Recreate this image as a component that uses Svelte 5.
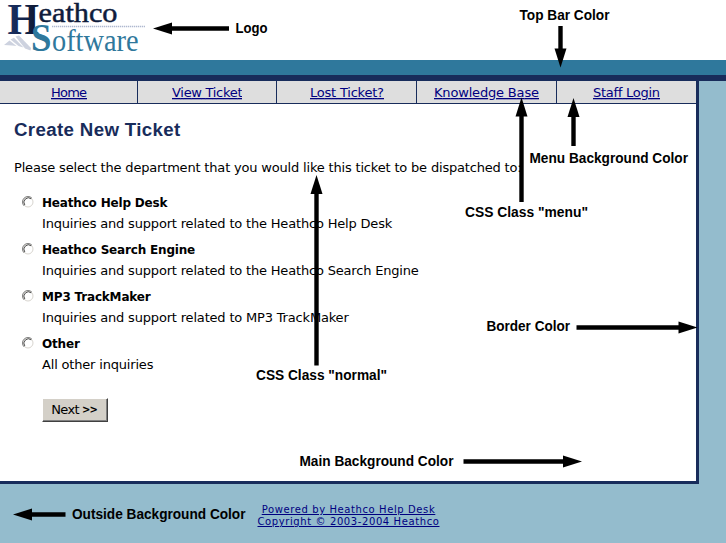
<script>
  const menu = [
    { label: 'Home', w: 137, len: 36 },
    { label: 'View Ticket', w: 138, len: 70.5 },
    { label: 'Lost Ticket?', w: 139, len: 74 },
    { label: 'Knowledge Base', w: 139, len: 105 },
    { label: 'Staff Login', w: 139, len: 67 }
  ];
  const departments = [
    { name: 'Heathco Help Desk', text: 'Inquiries and support related to the Heathco Help Desk' },
    { name: 'Heathco Search Engine', text: 'Inquiries and support related to the Heathco Search Engine' },
    { name: 'MP3 TrackMaker', text: 'Inquiries and support related to MP3 TrackMaker' },
    { name: 'Other', text: 'All other inquiries' }
  ];
  const notes = [
    { t: 'Logo', x: 235.5, y: 33, len: 32 },
    { t: 'Top Bar Color', x: 519.5, y: 20, len: 90 },
    { t: 'Menu Background Color', x: 529.5, y: 163, len: 158.5 },
    { t: 'CSS Class "menu"', x: 465, y: 217, len: 123 },
    { t: 'Border Color', x: 486.5, y: 331, len: 83.5 },
    { t: 'CSS Class "normal"', x: 256, y: 380, len: 131 },
    { t: 'Main Background Color', x: 299.5, y: 466, len: 154 },
    { t: 'Outside Background Color', x: 72, y: 519, len: 173.5 }
  ];
  const arrows = [
    [229, 28.5, 153, 28.5],
    [560.5, 26, 560.5, 67.5],
    [573.5, 146, 573.5, 98],
    [521.5, 202, 521.5, 97.5],
    [576.5, 327.5, 697.5, 327.5],
    [316.5, 365.5, 316.5, 175],
    [463.5, 461.5, 582, 461.5],
    [65.5, 514.5, 13, 514.5]
  ];
  function head([x1, y1, x2, y2]) {
    const l = Math.hypot(x2 - x1, y2 - y1);
    const dx = (x2 - x1) / l, dy = (y2 - y1) / l;
    const bx = x2 - dx * 19, by = y2 - dy * 19;
    return `${x2},${y2} ${bx - dy * 6},${by + dx * 6} ${bx + dy * 6},${by - dx * 6}`;
  }
  function shaftEnd([x1, y1, x2, y2]) {
    const l = Math.hypot(x2 - x1, y2 - y1);
    return [x2 - ((x2 - x1) / l) * 18, y2 - ((y2 - y1) / l) * 18];
  }
</script>

<div class="page">
  <header>
    <svg class="logo" width="150" height="60" viewBox="0 0 150 60">
      <defs>
        <linearGradient id="navy" x1="0" x2="1"><stop offset="0" stop-color="#1b3166" /><stop offset="1" stop-color="#0c1730" /></linearGradient>
      </defs>
      <g fill="#cdd2df">
        <path d="M15.5 36.5 L19 35.5 L31 48 L30.5 50.5 L25 48.5 Z" />
        <path d="M10.5 39.5 L14 37.8 L23.5 47.5 L18.5 46 Z" />
        <path d="M4 45 L9.5 40.5 L16.5 46 L12 45.4 Z" />
      </g>
      <path d="M52 26.5H145" stroke="#aeb8cf" stroke-width="1.6" stroke-dasharray="1.3 .7" />
      <text x="7.5" y="34.3" class="serif h" textLength="31.5" lengthAdjust="spacingAndGlyphs">H</text>
      <text x="38.5" y="22.3" class="serif eath" textLength="79" lengthAdjust="spacingAndGlyphs">eathco</text>
      <text x="31" y="51.3" class="serif s" textLength="20.5" lengthAdjust="spacingAndGlyphs">S</text>
      <text x="52" y="51" class="serif oft" textLength="86.5" lengthAdjust="spacingAndGlyphs">oftware</text>
    </svg>
  </header>
  <div class="topbar"></div>
  <div class="panel">
    <nav>
      {#each menu as m}
        <a href="#top" style="width:{m.w}px"><svg width={m.len} height="22"><text x="0" y="16" textLength={m.len}>{m.label}</text></svg></a>
      {/each}
    </nav>
    <main>
      <h1>Create New Ticket</h1>
      <p class="intro">Please select the department that you would like this ticket to be dispatched to:</p>
      {#each departments as d}
        <label>
          <svg class="radio" width="12" height="12" viewBox="0 0 12 12" fill="none">
            <circle cx="6" cy="6" r="5" fill="#fff" stroke="#d8d5cf" />
            <path d="M2.1 9.9A5.5 5.5 0 0 1 9.9 2.1" stroke="#808080" />
            <path d="M2.8 9A4.5 4.5 0 0 1 9.2 2.8" stroke="#404040" stroke-width=".9" />
          </svg>
          <span><b>{d.name}</b><span class="desc">{d.text}</span></span>
        </label>
      {/each}
      <button>Next <span class="more">&gt;&gt;</span></button>
    </main>
  </div>
  <footer>
    <a href="#top">Powered by Heathco Help Desk</a>
    <a href="#top">Copyright © 2003-2004 Heathco</a>
  </footer>
  <svg class="notes" width="726" height="543">
    {#each arrows as a}
      <line x1={a[0]} y1={a[1]} x2={shaftEnd(a)[0]} y2={shaftEnd(a)[1]} stroke="#000" stroke-width="4.4" />
      <polygon points={head(a)} />
    {/each}
    {#each notes as n}
      <text x={n.x} y={n.y} textLength={n.len} lengthAdjust="spacingAndGlyphs">{n.t}</text>
    {/each}
  </svg>
</div>

<style>
  :global(body) { margin: 0; }
  .page { position: relative; width: 726px; height: 543px; overflow: hidden; background: #94bccd; font: 13px/16px "DejaVu Sans", Verdana, sans-serif; color: #000; }
  header { height: 60px; background: #fff; }
  .logo { display: block; overflow: visible; }
  .serif { font-family: "Liberation Serif", serif; }
  .h { font-size: 44px; font-weight: bold; fill: url(#navy); }
  .eath { font-size: 28px; fill: #0f1c3c; stroke: #0f1c3c; stroke-width: .5; }
  .s { font-size: 39px; font-weight: bold; fill: #2f789c; }
  .oft { font-size: 31px; fill: #2f789c; }
  .topbar { height: 15px; background: #2f789c; border-bottom: 6px solid #182c5b; }
  .panel { box-sizing: border-box; width: 699px; height: 403px; background: #fff; border: solid #182c5b; border-width: 0 3px 3px 0; }
  nav { display: flex; height: 22px; background: #dedede; border-bottom: 1px solid #182c5b; }
  nav a { display: flex; justify-content: center; color: #000080; fill: #000080; text-decoration: none; }
  nav a + a { border-left: 1px solid #182c5b; }
  nav svg { display: block; }
  nav text { text-decoration: underline; }
  main { padding: 15px 0 0 14px; }
  h1 { margin: 0; font: bold 18.7px/22px "Liberation Sans", Arial, sans-serif; color: #182c5b; letter-spacing: .35px; }
  .intro { margin: 19px 0 17px; white-space: nowrap; letter-spacing: -.18px; }
  label { display: flex; height: 47px; padding-left: 8px; gap: 8px; }
  .radio { margin: 3px 0 0; flex: none; }
  label b { display: block; margin-top: 2px; line-height: 16px; height: 21px; font-size: 12px; letter-spacing: -.18px; white-space: nowrap; }
  .desc { display: block; white-space: nowrap; letter-spacing: -.18px; }
  button { display: flex; align-items: center; justify-content: center; gap: 3px; margin: 17px 0 0 28px; width: 66px; height: 24px; padding: 0 2px 2px 0; background: #d4d0c8; border: 1px solid; border-color: #fff #404040 #404040 #fff; box-shadow: inset -1px -1px #808080; font: 13px "DejaVu Sans", sans-serif; letter-spacing: -.6px; color: #000; }
  .more { font-size: 10px; font-weight: bold; letter-spacing: -1px; }
  footer { display: flex; flex-direction: column; align-items: center; width: 697px; padding-top: 20px; font-size: 10px; line-height: 12px; }
  footer a { color: #000080; letter-spacing: .6px; }
  .notes { position: absolute; inset: 0; pointer-events: none; }
  .notes text { font: bold 14px "Liberation Sans", Arial, sans-serif; }
</style>
